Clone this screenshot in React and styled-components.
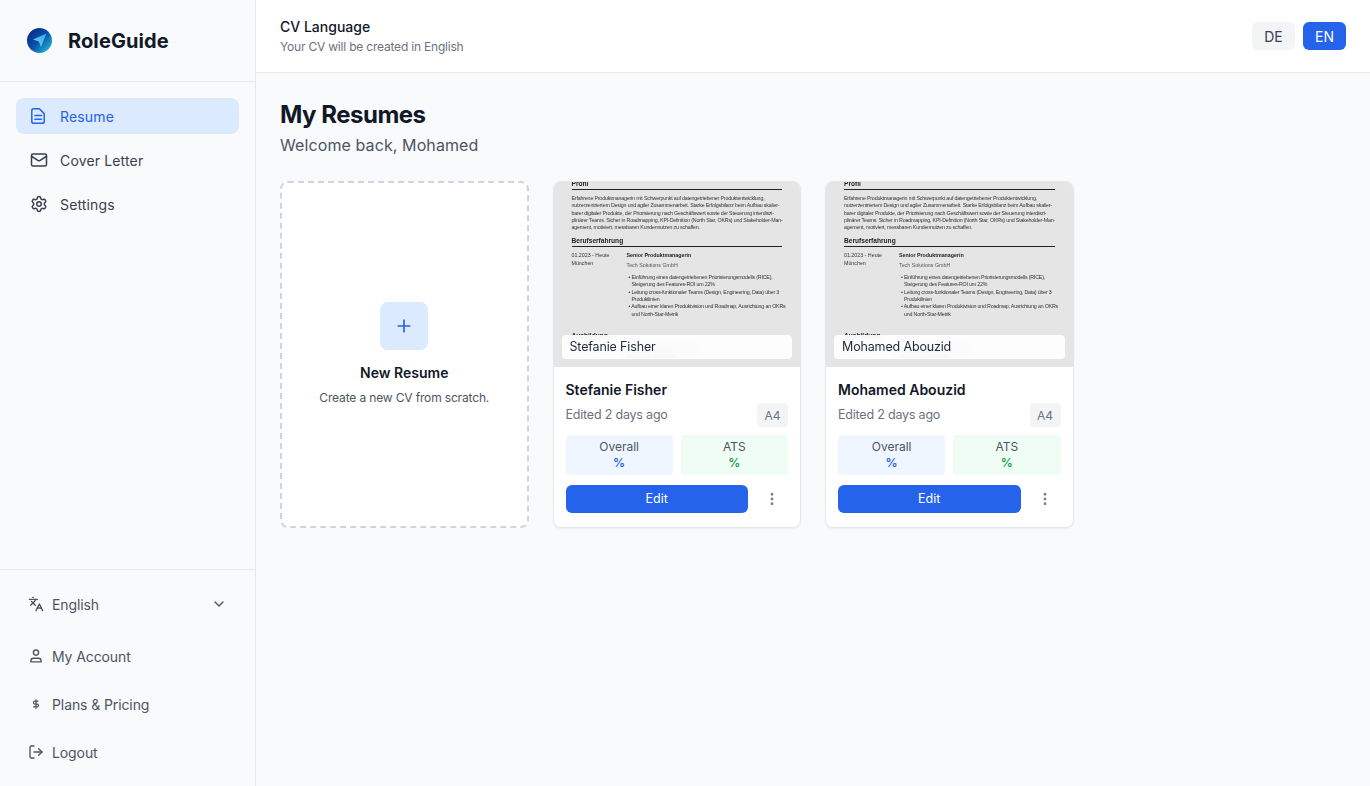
import styled, { createGlobalStyle } from 'styled-components'
import { Mail, Settings, Languages, ChevronDown, DollarSign, LogOut, Plus, MoreVertical } from 'lucide-react'

const GlobalStyle = createGlobalStyle`
  * { box-sizing: border-box; }
  html, body { margin: 0; height: 100%; }
  body {
    background: #f9fafb;
    font-family: Inter, "Open Sans", sans-serif;
    color: #111827;
  }
`

const Shell = styled.div`
  display: flex;
  width: 1370px;
  height: 786px;
  overflow: hidden;
`

const Sidebar = styled.aside`
  width: 256px;
  flex: none;
  display: flex;
  flex-direction: column;
  background: #f9fafb;
  border-right: 1px solid #e5e7eb;
`

const Brand = styled.div`
  height: 82px;
  flex: none;
  display: flex;
  align-items: center;
  gap: 16px;
  padding: 0 0 0 27px;
  border-bottom: 1px solid #e5e7eb;
  font-size: 20px;
  font-weight: 700;
  letter-spacing: 0.1px;
`

const Nav = styled.nav`
  flex: 1;
  display: flex;
  flex-direction: column;
  gap: 8px;
  padding: 16px;
`

const NavItem = styled.div`
  height: 36px;
  display: flex;
  align-items: center;
  gap: 12px;
  padding: 0 14px;
  border-radius: 8px;
  font-size: 14px;
  font-weight: 400;
  letter-spacing: 0.15px;
  background: ${p => (p.$active ? '#dbeafe' : 'transparent')};
  color: ${p => (p.$active ? '#2563eb' : '#374151')};
`

const SideFooter = styled.div`
  height: 217px;
  flex: none;
  display: flex;
  flex-direction: column;
  padding: 10px 28px;
  border-top: 1px solid #e5e7eb;
`

const FooterItem = styled.div`
  height: 48px;
  display: flex;
  align-items: center;
  gap: 8px;
  font-size: 14px;
  letter-spacing: -0.1px;
  color: #4b5563;
  margin-bottom: ${p => (p.$spaced ? '4px' : '0')};
  span { flex: 1; }
`

const Main = styled.main`
  flex: 1;
  min-width: 0;
  display: flex;
  flex-direction: column;
`

const TopBar = styled.header`
  height: 73px;
  flex: none;
  display: flex;
  align-items: center;
  justify-content: space-between;
  padding: 0 24px;
  background: #ffffff;
  border-bottom: 1px solid #e5e7eb;
`

const BarTitle = styled.div`
  font-size: 14px;
  font-weight: 500;
  line-height: 20px;
  color: #111827;
`

const BarHint = styled.div`
  font-size: 12px;
  line-height: 16px;
  letter-spacing: -0.2px;
  color: #6b7280;
  margin-top: 2px;
`

const LangGroup = styled.div`
  display: flex;
  gap: 8px;
`

const LangButton = styled.div`
  width: 43px;
  height: 28px;
  display: flex;
  align-items: center;
  justify-content: center;
  border-radius: 6px;
  font-size: 14px;
  font-weight: 400;
  background: ${p => (p.$active ? '#2563eb' : '#f3f4f6')};
  color: ${p => (p.$active ? '#ffffff' : '#374151')};
`

const Content = styled.div`
  flex: 1;
  padding: 24px;
`

const Heading = styled.h1`
  margin: 2px 0 0;
  font-size: 24px;
  line-height: 32px;
  font-weight: 700;
  letter-spacing: -0.5px;
  color: #111827;
`

const SubHeading = styled.p`
  margin: 2px 0 0;
  font-size: 16px;
  line-height: 24px;
  letter-spacing: 0.1px;
  color: #4b5563;
`

const CardGrid = styled.div`
  display: grid;
  grid-template-columns: repeat(4, 1fr);
  grid-auto-rows: 347px;
  gap: 24px;
  margin-top: 24px;
`

const NewCard = styled.div`
  display: flex;
  flex-direction: column;
  align-items: center;
  justify-content: center;
  background: #ffffff;
  border: 2px dashed #d1d5db;
  border-radius: 8px;
  padding-bottom: 2px;
`

const PlusTile = styled.div`
  width: 48px;
  height: 48px;
  display: flex;
  align-items: center;
  justify-content: center;
  border-radius: 8px;
  background: #dbeafe;
  color: #2563eb;
`

const NewTitle = styled.div`
  margin-top: 13px;
  font-size: 14px;
  line-height: 20px;
  font-weight: 600;
  color: #111827;
`

const NewHint = styled.div`
  margin-top: 7px;
  font-size: 12px;
  line-height: 16px;
  letter-spacing: -0.15px;
  color: #4b5563;
`

const Card = styled.article`
  display: flex;
  flex-direction: column;
  background: #ffffff;
  border: 1px solid #e5e7eb;
  border-radius: 8px;
  overflow: hidden;
  box-shadow: 0 1px 2px rgba(0, 0, 0, 0.05);
`

const Preview = styled.div`
  position: relative;
  height: 185px;
  flex: none;
  overflow: hidden;
  background: #e5e5e5;
  padding: 0 18px;
`

const Sheet = styled.div`
  margin-top: -2px;
  font-family: "Liberation Sans", Arial, sans-serif;
  font-size: 5.3px;
  line-height: 7.3px;
  color: #333333;
  filter: blur(0.25px);
`

const SheetTitle = styled.div`
  font-size: 6.6px;
  line-height: 8px;
  font-weight: 700;
  color: #222222;
  padding-bottom: 1px;
  border-bottom: ${p => (p.$plain ? 'none' : '1px solid #222222')};
  margin: ${p => p.$top || '0'} 0 5px;
`

const SheetLine = styled.div`
  white-space: nowrap;
  letter-spacing: -0.18px;
`

const Job = styled.div`
  display: flex;
`

const JobWhen = styled.div`
  width: 55px;
  flex: none;
`

const JobRole = styled.div`
  font-weight: 700;
  color: #222222;
`

const JobFirm = styled.div`
  margin: 2px 0 5px;
  color: #555555;
`

const Bullet = styled.div`
  white-space: nowrap;
  padding-left: 5px;
  letter-spacing: -0.2px;
  text-indent: ${p => (p.$first ? '-3px' : '0')};
`

const NameTag = styled.div`
  position: absolute;
  left: 8px;
  right: 8px;
  bottom: 8px;
  height: 24px;
  display: flex;
  align-items: center;
  padding: 0 8px 1px;
  border-radius: 4px;
  background: rgba(255, 255, 255, 0.9);
  backdrop-filter: blur(4px);
  font-family: Inter, sans-serif;
  font-size: 12.5px;
  letter-spacing: -0.15px;
  color: #1f2937;
`

const CardBody = styled.div`
  flex: 1;
  padding: 13px 12px 12px;
  display: flex;
  flex-direction: column;
`

const CardName = styled.div`
  font-size: 14px;
  line-height: 20px;
  font-weight: 600;
  color: #111827;
`

const MetaRow = styled.div`
  display: flex;
  align-items: center;
  justify-content: space-between;
  margin-top: 3px;
`

const MetaText = styled.div`
  padding-bottom: 2px;
  font-size: 12.5px;
  letter-spacing: -0.2px;
  color: #6b7280;
`

const PageBadge = styled.div`
  width: 31px;
  height: 24px;
  display: flex;
  align-items: center;
  justify-content: center;
  border-radius: 4px;
  background: #f3f4f6;
  font-size: 12px;
  color: #6b7280;
`

const Scores = styled.div`
  display: grid;
  grid-template-columns: 1fr 1fr;
  gap: 8px;
  margin-top: 8px;
`

const Score = styled.div`
  height: 40px;
  display: flex;
  flex-direction: column;
  align-items: center;
  justify-content: center;
  border-radius: 4px;
  font-size: 12px;
  line-height: 16px;
  color: #4b5563;
  background: ${p => (p.$tone === 'green' ? '#f0fdf4' : '#eff6ff')};
  strong {
    font-weight: 600;
    color: ${p => (p.$tone === 'green' ? '#16a34a' : '#2563eb')};
  }
`

const Actions = styled.div`
  display: flex;
  align-items: center;
  gap: 8px;
  margin-top: 10px;
`

const EditButton = styled.div`
  flex: 1;
  height: 28px;
  display: flex;
  align-items: center;
  justify-content: center;
  padding-bottom: 1px;
  border-radius: 6px;
  background: #2563eb;
  color: #ffffff;
  font-size: 12.5px;
  font-weight: 400;
`

const MoreButton = styled.div`
  width: 32px;
  display: flex;
  justify-content: center;
  color: #7b8290;
`

// lucide has no file icon with this blunt corner, so it is drawn here
const ResumeIcon = () => (
  <svg width="18" height="18" viewBox="0 0 18 18" fill="none" stroke="currentColor" strokeWidth="1.5" strokeLinecap="round" strokeLinejoin="round">
    <path d="M1.8 3.5c0-1 .8-1.8 1.8-1.8h5.7l4.9 4.9v7.9c0 1-.8 1.8-1.8 1.8H3.6c-1 0-1.8-.8-1.8-1.8z" />
    <path d="M4.9 8.6h6.6M4.9 12.2h6.6" />
  </svg>
)

const AccountIcon = () => (
  <svg width="16" height="16" viewBox="0 0 16 16" fill="none" stroke="currentColor" strokeWidth="1.4" strokeLinecap="round" strokeLinejoin="round">
    <circle cx="8" cy="4.6" r="2.6" />
    <path d="M3 13.9v-1.1c0-1.5 1.2-2.6 2.6-2.6h4.8c1.4 0 2.6 1.1 2.6 2.6v1.1z" />
  </svg>
)

const LogoMark = () => (
  <svg width="25" height="25" viewBox="0 0 25 25">
    <defs>
      <linearGradient id="logoFill" x1="0.1" y1="0.1" x2="0.9" y2="0.9">
        <stop offset="0" stopColor="#0b2a8a" />
        <stop offset="0.5" stopColor="#0b4fa8" />
        <stop offset="1" stopColor="#22b5d8" />
      </linearGradient>
      <linearGradient id="logoArrow" x1="0" y1="1" x2="1" y2="0">
        <stop offset="0" stopColor="#6fd6f2" />
        <stop offset="1" stopColor="#2ba6e6" />
      </linearGradient>
    </defs>
    <circle cx="12.5" cy="12.5" r="12.5" fill="url(#logoFill)" />
    <path d="M19.5 5.5L14 19l-2.2-5.6L6 11.5z" fill="url(#logoArrow)" />
  </svg>
)

const resumes = [
  { name: 'Stefanie Fisher', firm: 'Tech Solutions GmbH' },
  { name: 'Mohamed Abouzid', firm: 'Tech Solutions GmbH' },
]

const profile = [
  'Erfahrene Produktmanagerin mit Schwerpunkt auf datengetriebener Produktentwicklung,',
  'nutzerzentriertem Design und agiler Zusammenarbeit. Starke Erfolgsbilanz beim Aufbau skalier-',
  'barer digitaler Produkte, der Priorisierung nach Geschäftswert sowie der Steuerung interdiszi-',
  'plinärer Teams. Sicher in Roadmapping, KPI-Definition (North Star, OKRs) und Stakeholder-Man-',
  'agement, motiviert, messbaren Kundennutzen zu schaffen.',
]

const bullets = [
  ['• Einführung eines datengetriebenen Priorisierungsmodells (RICE),', 'Steigerung des Features-ROI um 22%'],
  ['• Leitung cross-funktionaler Teams (Design, Engineering, Data) über 3', 'Produktlinien'],
  ['• Aufbau einer klaren Produktvision und Roadmap, Ausrichtung an OKRs', 'und North-Star-Metrik'],
]

function ResumeCard({ resume }) {
  return (
    <Card>
      <Preview>
        <Sheet>
          <SheetTitle>Profil</SheetTitle>
          {profile.map(line => <SheetLine key={line}>{line}</SheetLine>)}
          <SheetTitle $top="6px">Berufserfahrung</SheetTitle>
          <Job>
            <JobWhen>01.2023 - Heute<br />München</JobWhen>
            <div>
              <JobRole>Senior Produktmanagerin</JobRole>
              <JobFirm>{resume.firm}</JobFirm>
              {bullets.map(lines => lines.map((line, i) => (
                <Bullet key={line} $first={i === 0}>{line}</Bullet>
              )))}
            </div>
          </Job>
          <SheetTitle $top="14px" $plain>Ausbildung</SheetTitle>
          <Job>
            <JobWhen>2016 - 2018</JobWhen>
            <div>
              <JobRole>M.Sc. Wirtschaftsinformatik</JobRole>
              <SheetLine>Technische Universität</SheetLine>
            </div>
          </Job>
        </Sheet>
        <NameTag>{resume.name}</NameTag>
      </Preview>
      <CardBody>
        <CardName>{resume.name}</CardName>
        <MetaRow>
          <MetaText>Edited 2 days ago</MetaText>
          <PageBadge>A4</PageBadge>
        </MetaRow>
        <Scores>
          <Score>Overall<strong>%</strong></Score>
          <Score $tone="green">ATS<strong>%</strong></Score>
        </Scores>
        <Actions>
          <EditButton>Edit</EditButton>
          <MoreButton><MoreVertical size={16} strokeWidth={2.4} /></MoreButton>
        </Actions>
      </CardBody>
    </Card>
  )
}

export default function App() {
  return (
    <>
      <GlobalStyle />
      <Shell>
        <Sidebar>
          <Brand><LogoMark />RoleGuide</Brand>
          <Nav>
            <NavItem $active><ResumeIcon />Resume</NavItem>
            <NavItem><Mail size={18} />Cover Letter</NavItem>
            <NavItem><Settings size={18} />Settings</NavItem>
          </Nav>
          <SideFooter>
            <FooterItem $spaced><Languages size={16} /><span>English</span><ChevronDown size={16} /></FooterItem>
            <FooterItem><AccountIcon />My Account</FooterItem>
            <FooterItem><DollarSign size={10} strokeWidth={3} style={{ margin: '0 3px' }} />Plans &amp; Pricing</FooterItem>
            <FooterItem><LogOut size={16} />Logout</FooterItem>
          </SideFooter>
        </Sidebar>
        <Main>
          <TopBar>
            <div>
              <BarTitle>CV Language</BarTitle>
              <BarHint>Your CV will be created in English</BarHint>
            </div>
            <LangGroup>
              <LangButton>DE</LangButton>
              <LangButton $active>EN</LangButton>
            </LangGroup>
          </TopBar>
          <Content>
            <Heading>My Resumes</Heading>
            <SubHeading>Welcome back, Mohamed</SubHeading>
            <CardGrid>
              <NewCard>
                <PlusTile><Plus size={20} /></PlusTile>
                <NewTitle>New Resume</NewTitle>
                <NewHint>Create a new CV from scratch.</NewHint>
              </NewCard>
              {resumes.map(resume => <ResumeCard key={resume.name} resume={resume} />)}
            </CardGrid>
          </Content>
        </Main>
      </Shell>
    </>
  )
}
